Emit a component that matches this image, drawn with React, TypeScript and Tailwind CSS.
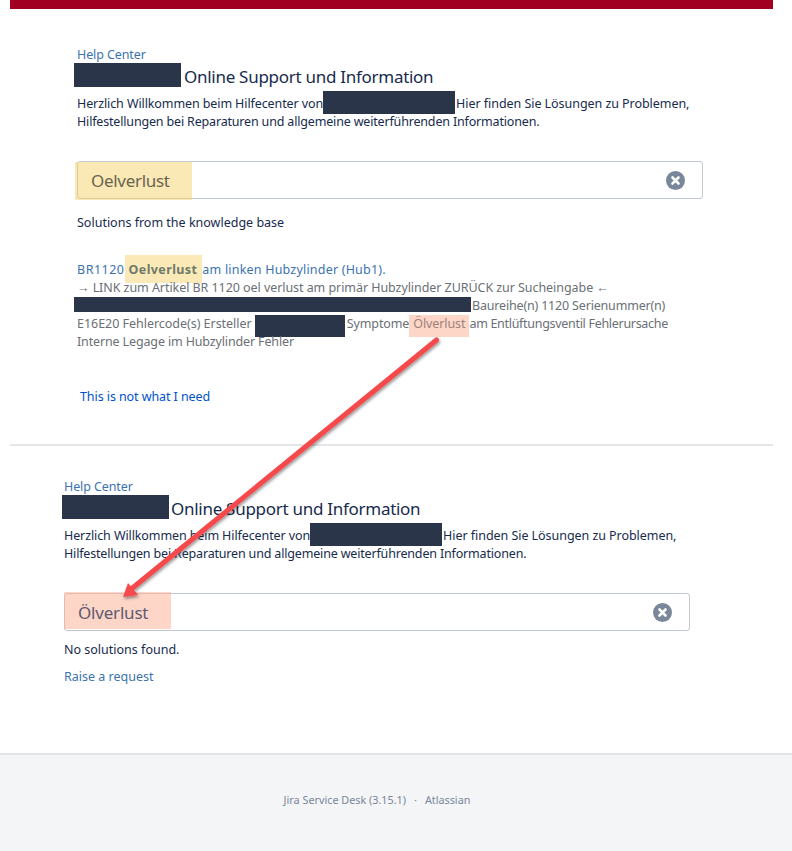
const font = { fontFamily: '"Noto Sans", sans-serif' };

function ClearIcon() {
  return (
    <svg width="19" height="19" viewBox="0 0 19 19" className="relative block">
      <circle cx="9.5" cy="9.5" r="9.5" fill="#7a869a" />
      <path d="M6.5 6.5l6 6M12.5 6.5l-6 6" stroke="#fff" strokeWidth="2.6" strokeLinecap="round" />
    </svg>
  );
}

function Header({ offset, gap }: { offset: string; gap: string }) {
  return (
    <>
      <div className="h-[18px] leading-[18px] text-[#3b73af] tracking-[-0.1px]">Help Center</div>
      <div className={`flex items-center h-[24px] -mt-px ${offset}`}>
        <span className="w-[107px] h-[24px] bg-[#2b3549]" />
        <span className={`${gap} pt-[3px] text-[17px] tracking-[-0.28px] text-[#172b4d] leading-[24px] whitespace-nowrap`}>
          Online Support und Information
        </span>
      </div>
      <p className="mt-[8px] w-[640px] leading-[18px] text-[#172b4d] whitespace-nowrap">
        <span className="tracking-[-0.1px]">Herzlich Willkommen beim Hilfecenter von</span>
        <span className="inline-block align-top w-[132px] h-[23px] -mt-[4px] -mb-px bg-[#2b3549]" />
        <span className="ml-px tracking-[-0.05px]">Hier finden Sie Lösungen zu Problemen,</span>
        <br />
        <span className="tracking-[-0.17px]">Hilfestellungen bei Reparaturen und allgemeine weiterführenden Informationen.</span>
      </p>
    </>
  );
}

function SearchBox({ text, tint, color, track }: { text: string; tint: string; color: string; track: string }) {
  return (
    <div className="relative flex items-center justify-between w-[626px] h-[38px] pl-[13px] pr-[17px] border border-[#c1c7d0] rounded-[3px] bg-white">
      <span className={`absolute ${tint}`} />
      <span className={`relative pt-[2px] text-[17px] ${track} ${color}`}>{text}</span>
      <ClearIcon />
    </div>
  );
}

export default function App() {
  return (
    <div className="relative w-[792px] h-[851px] bg-white text-[12.5px] overflow-hidden" style={font}>
      <div className="ml-[10px] w-[763px] h-[9px] bg-[#a10021]" />

      <section className="pl-[77px] pt-[37px]">
        <Header offset="-ml-[3px]" gap="ml-[3px]" />
        <div className="mt-[30px]">
          <SearchBox
            text="Oelverlust"
            tint="-left-[3px] top-0 w-[117px] h-[38px] bg-[#f5d16b]/50"
            color="text-[#6a654f]"
            track="tracking-[-0.3px]"
          />
        </div>
        <p className="mt-[15px] leading-[18px] text-[#172b4d]">Solutions from the knowledge base</p>
        <div className="mt-[29px] w-[640px] leading-[18px] text-[#6b6f76] whitespace-nowrap">
          <div className="text-[#3b73af]">
            <span className="tracking-[0.5px]">BR1120</span>
            <span className="inline-block align-top -mt-[6px] -mb-[4px] h-[28px] leading-[30px] pl-[4px] pr-[5px] bg-[#fce9b8] font-bold tracking-[0.4px] text-[#6f7a68]">Oelverlust</span>
            <span className="tracking-[0.2px]">am linken Hubzylinder (Hub1).</span>
          </div>
          <div className="tracking-[-0.06px]">→ LINK zum Artikel BR 1120 oel verlust am primär Hubzylinder ZURÜCK zur Sucheingabe ←</div>
          <div className="-ml-[3px]">
            <span className="inline-block align-top w-[397px] h-[15px] bg-[#2b3549]" />
            <span className="ml-px tracking-[-0.18px]">Baureihe(n) 1120 Serienummer(n)</span>
          </div>
          <div>
            <span className="tracking-[-0.03px]">E16E20 Fehlercode(s) Ersteller</span>
            <span className="inline-block align-top w-[90px] h-[22px] -mb-[4px] ml-[3px] mr-[2px] bg-[#2b3549]" />
            <span className="tracking-[-0.1px]">Symptome</span>
            <span className="inline-block align-top h-[22px] -mb-[4px] px-[4px] bg-[#fdd6c8] text-[#a08078] tracking-[-0.1px]">Ölverlust</span>
            <span className="tracking-[-0.3px]">am Entlüftungsventil Fehlerursache</span>
          </div>
          <div className="tracking-[-0.14px]">Interne Legage im Hubzylinder Fehler</div>
        </div>
        <a className="block mt-[37px] ml-[3px] leading-[18px] text-[#0052cc] tracking-[-0.08px]">This is not what I need</a>
      </section>

      <hr className="mt-[38px] ml-[10px] w-[763px] border-0 h-[2px] bg-[#e4e6ea]" />

      <section className="pl-[64px] pt-[32px]">
        <Header offset="-ml-[2px]" gap="ml-[2px]" />
        <div className="mt-[30px]">
          <SearchBox
            text="Ölverlust"
            tint="-left-px -top-[2px] w-[107px] h-[37px] bg-[#fbad91]/50"
            color="text-[#5d5a70]"
            track="tracking-[-0.2px]"
          />
        </div>
        <p className="mt-[10px] leading-[18px] text-[#172b4d]">No solutions found.</p>
        <a className="block mt-[9px] leading-[18px] text-[#3b73af]">Raise a request</a>
      </section>

      <footer className="absolute left-0 right-0 top-[753px] bottom-0 border-t-2 border-[#e4e5e7] bg-[#f4f5f7] flex justify-center pt-[37px] pr-[38px] text-[10.8px] leading-[16px] text-[#7a869a]">
        <span>Jira Service Desk (3.15.1)</span>
        <span className="mx-[8px]">·</span>
        <span>Atlassian</span>
      </footer>

      <svg className="absolute inset-0 pointer-events-none" width="792" height="851" viewBox="0 0 792 851">
        <defs>
          <filter id="s" x="-10%" y="-10%" width="120%" height="120%">
            <feDropShadow dx="1" dy="2" stdDeviation="1.5" floodColor="#000" floodOpacity="0.4" />
          </filter>
        </defs>
        <g filter="url(#s)">
          <path d="M436.500 340L130 590" stroke="#f5484c" strokeWidth="5" strokeLinecap="round" />
          <path d="M123 597L128 583L138 595Z" fill="#f5484c" />
        </g>
      </svg>
    </div>
  );
}
